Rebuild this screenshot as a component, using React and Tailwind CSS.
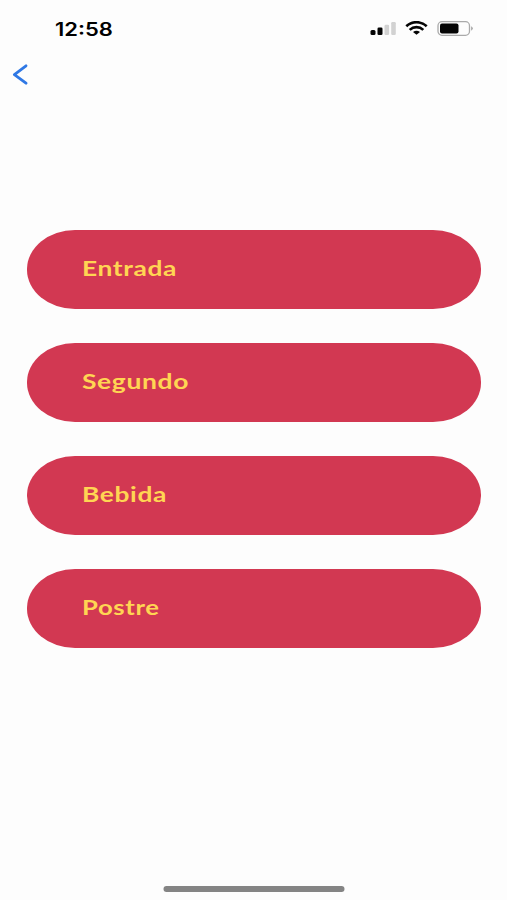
import React from 'react'

const categories = [
  { name: 'Entrada', stretch: 'scale-x-[1.255]' },
  { name: 'Segundo', stretch: 'scale-x-[1.26]' },
  { name: 'Bebida', stretch: 'scale-x-[1.255]' },
  { name: 'Postre', stretch: 'scale-x-[1.225]' },
]

const StatusBar = () => {
  return (
    <div className="flex h-14 items-center justify-between pl-[55px] pr-[33px]">
      <span className="mt-[3px] inline-block origin-left scale-x-[1.22] font-['Inter'] text-[18px] leading-none font-semibold text-black">12:58</span>
      <div className="flex items-center">
        {/* Signal */}
        <svg className="h-[14px] w-[26px]" viewBox="0 0 26 14">
          <rect x="0.5" y="9" width="5" height="5" rx="1.5" fill="#050505" />
          <rect x="7.5" y="6.5" width="5" height="7.5" rx="1.3" fill="#050505" />
          <rect x="14.5" y="3.8" width="4.6" height="10.2" rx="1.2" fill="#d2d2d2" />
          <rect x="21.2" y="1" width="4.6" height="13" rx="1.2" fill="#d2d2d2" />
        </svg>
        {/* Wifi */}
        <svg className="ml-[9px] h-[14px] w-[23px]" viewBox="0 0 23 14" fill="none" stroke="#050505">
          <path d="M1.3 5.3C7 -0.2 16 -0.2 21.7 5.3" strokeWidth="2.6" />
          <path d="M4.7 8.9C8.6 5.2 14.4 5.2 18.3 8.9" strokeWidth="2.6" />
          <path d="M8 11.1Q11.5 8.4 15 11.1L11.5 13.8Z" fill="#050505" stroke="none" />
        </svg>
        {/* Battery */}
        <svg className="ml-[9px] h-[15px] w-[37px]" viewBox="0 0 37 15">
          <rect x="1" y="0.7" width="31.5" height="13.6" rx="4" fill="none" stroke="#aaaaaa" strokeWidth="1.3" />
          <rect x="3" y="2.5" width="18.5" height="10" rx="2" fill="#050505" />
          <path d="M34.2 5.3Q37.4 7.5 34.2 9.7Z" fill="#a0a0a0" />
        </svg>
      </div>
    </div>
  )
}

const App = () => {
  return (
    <div className="flex h-[900px] w-full flex-col overflow-hidden bg-[#fdfdfd]">
      <StatusBar />

      {/* Back button */}
      <button type="button" aria-label="Volver" className="ml-3 mt-2 h-[22px] w-4">
        <svg className="h-[22px] w-4" viewBox="0 0 16 22" fill="none" stroke="#2f78e5" strokeWidth="2.8" strokeLinecap="round" strokeLinejoin="round">
          <path d="M14 1.8L2.4 10.6L14 19.2" />
        </svg>
      </button>

      <div className="mt-36 flex flex-col gap-[34.5px] pl-[27px] pr-[26px]">
        {categories.map((item) => (
          <button
            key={item.name}
            type="button"
            className="flex h-[78.5px] items-center rounded-[48px/39.25px] bg-[#d23852] pb-[3px] pl-[54.5px] text-left"
          >
            <span className={`${item.stretch} inline-block origin-left font-['Lato'] text-[21px] leading-none font-bold tracking-[0.5px] text-[#ffd553]`}>
              {item.name}
            </span>
          </button>
        ))}
      </div>

      {/* Home indicator */}
      <div className="mx-auto mt-auto mb-[8.5px] h-[5.5px] w-[181px] translate-x-[0.5px] rounded-full bg-[#848484]" />
    </div>
  )
}

export default App
